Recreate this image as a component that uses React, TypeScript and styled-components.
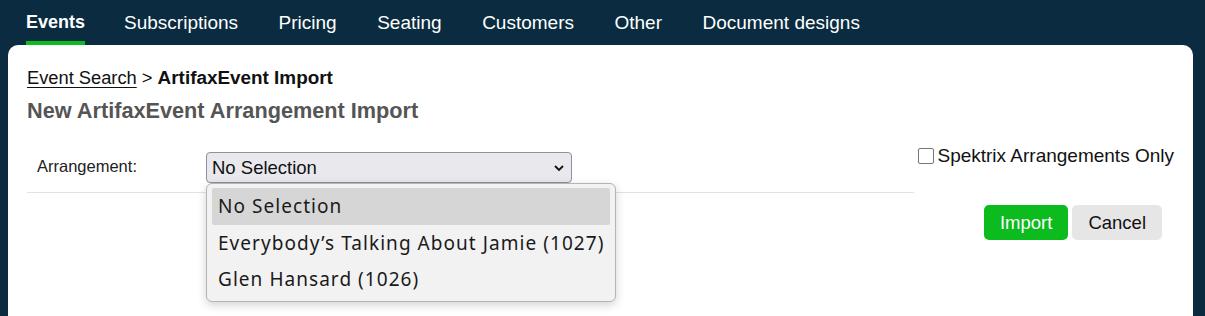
import * as React from "react";
import styled, { createGlobalStyle } from "styled-components";

const GlobalStyle = createGlobalStyle`
  html, body {
    margin: 0;
    padding: 0;
    background: #0a2b40;
    font-family: "Liberation Sans", Arial, sans-serif;
  }
`;

const tabs = [
  "Events",
  "Subscriptions",
  "Pricing",
  "Seating",
  "Customers",
  "Other",
  "Document designs",
];

const options = [
  "No Selection",
  "Everybody\u2019s Talking About Jamie (1027)",
  "Glen Hansard (1026)",
];

export default function App() {
  return (
    <Page>
      <GlobalStyle />
      <NavBar>
        {tabs.map((t, i) => (
          <Tab key={t} $active={i === 0}>
            {t}
          </Tab>
        ))}
      </NavBar>
      <Card>
        <Breadcrumb>
          <CrumbLink>Event Search</CrumbLink> &gt; <strong>ArtifaxEvent Import</strong>
        </Breadcrumb>
        <Heading>New ArtifaxEvent Arrangement Import</Heading>
        <FormArea>
          <FormMain>
            <FieldRow>
              <Label>Arrangement:</Label>
              <SelectWrap>
                <SelectBox>
                  <span>No Selection</span>
                  <svg width="12" height="8" viewBox="0 0 12 8">
                    <path d="M2 2l4 4 4-4" fill="none" stroke="#111" strokeWidth="1.8" />
                  </svg>
                </SelectBox>
                <OptionList>
                  {options.map((o, i) => (
                    <OptionItem key={o} $selected={i === 0}>
                      {o}
                    </OptionItem>
                  ))}
                </OptionList>
              </SelectWrap>
            </FieldRow>
          </FormMain>
          <SideColumn>
            <CheckLabel>
              <CheckBox />
              Spektrix Arrangements Only
            </CheckLabel>
            <Buttons>
              <Button $primary>Import</Button>
              <Button>Cancel</Button>
            </Buttons>
          </SideColumn>
        </FormArea>
      </Card>
    </Page>
  );
}

const Page = styled.div`
  width: 1205px;
  height: 316px;
  overflow: hidden;
  background: #0a2b40;
`;

const NavBar = styled.nav`
  display: flex;
  height: 45px;
  padding-left: 26px;
`;

const Tab = styled.div<{ $active?: boolean }>`
  display: flex;
  align-items: center;
  margin-right: ${(p) => (p.$active ? 39 : 40.5)}px;
  padding-top: 4px;
  color: #ffffff;
  font-size: ${(p) => (p.$active ? 18 : 19)}px;
  font-weight: ${(p) => (p.$active ? 700 : 400)};
  border-bottom: 4px solid ${(p) => (p.$active ? "#0cbb1e" : "transparent")};
  box-sizing: border-box;
`;

const Card = styled.div`
  margin: 0 12px 0 8px;
  height: 300px;
  background: #ffffff;
  border-radius: 10px;
  padding: 22px 19px 0;
  box-sizing: border-box;
`;

const Breadcrumb = styled.div`
  font-size: 18.3px;
  color: #111;
  line-height: 22px;
  strong {
    font-weight: 700;
    font-size: 18.9px;
  }
`;

const CrumbLink = styled.span`
  text-decoration: underline;
  text-underline-offset: 3px;
  text-decoration-thickness: 1px;
`;

const Heading = styled.h1`
  margin: 10px 0 0;
  font-size: 21.7px;
  font-weight: 700;
  color: #555555;
  line-height: 24px;
`;

const FormArea = styled.div`
  display: flex;
  margin-top: 29px;
`;

const FormMain = styled.div`
  width: 887px;
  border-bottom: 1px solid #e2e2e2;
  height: 40px;
`;

const FieldRow = styled.div`
  display: flex;
  align-items: flex-start;
  padding-left: 10px;
`;

const Label = styled.div`
  width: 169px;
  font-size: 16.5px;
  color: #222;
  padding-top: 5px;
`;

const SelectWrap = styled.div`
  position: relative;
`;

const SelectBox = styled.div`
  width: 366px;
  height: 31px;
  box-sizing: border-box;
  background: #e9e9ed;
  border: 1px solid #8f8f9d;
  border-radius: 4px;
  display: flex;
  align-items: center;
  justify-content: space-between;
  padding: 0 6px 0 5px;
  font-size: 18.5px;
  color: #111;
`;

const OptionList = styled.div`
  position: absolute;
  top: 31px;
  left: 0;
  width: 410px;
  box-sizing: border-box;
  padding: 4px 5px 3px;
  background: #f2f2f2;
  border: 1px solid #b4b4b4;
  border-radius: 6px;
  box-shadow: 0 3px 10px rgba(0, 0, 0, 0.18);
  font-family: "Noto Sans", "DejaVu Sans", sans-serif;
  z-index: 2;
`;

const OptionItem = styled.div<{ $selected?: boolean }>`
  height: 36.5px;
  display: flex;
  align-items: center;
  padding-left: 6px;
  font-size: 19px;
  letter-spacing: 1.05px;
  color: #1a1a1a;
  border-radius: 2px;
  background: ${(p) => (p.$selected ? "#d6d6d6" : "transparent")};
  white-space: nowrap;
`;

const SideColumn = styled.div`
  display: flex;
  flex-direction: column;
  align-items: flex-end;
  flex: 1;
  margin-top: -7px;
`;

const CheckLabel = styled.label`
  display: flex;
  align-items: center;
  font-size: 19px;
  color: #111;
`;

const CheckBox = styled.span`
  width: 14px;
  height: 14px;
  border: 1px solid #767676;
  border-radius: 2px;
  margin-right: 3px;
`;

const Buttons = styled.div`
  display: flex;
  gap: 4px;
  margin-top: 38px;
  margin-right: 12px;
`;

const Button = styled.button<{ $primary?: boolean }>`
  height: 35px;
  padding: 0 16px;
  border: none;
  border-radius: 5px;
  font-family: "Liberation Sans", Arial, sans-serif;
  font-size: 18.5px;
  background: ${(p) => (p.$primary ? "#0cbb1e" : "#e6e6e6")};
  color: ${(p) => (p.$primary ? "#ffffff" : "#111")};
`;
